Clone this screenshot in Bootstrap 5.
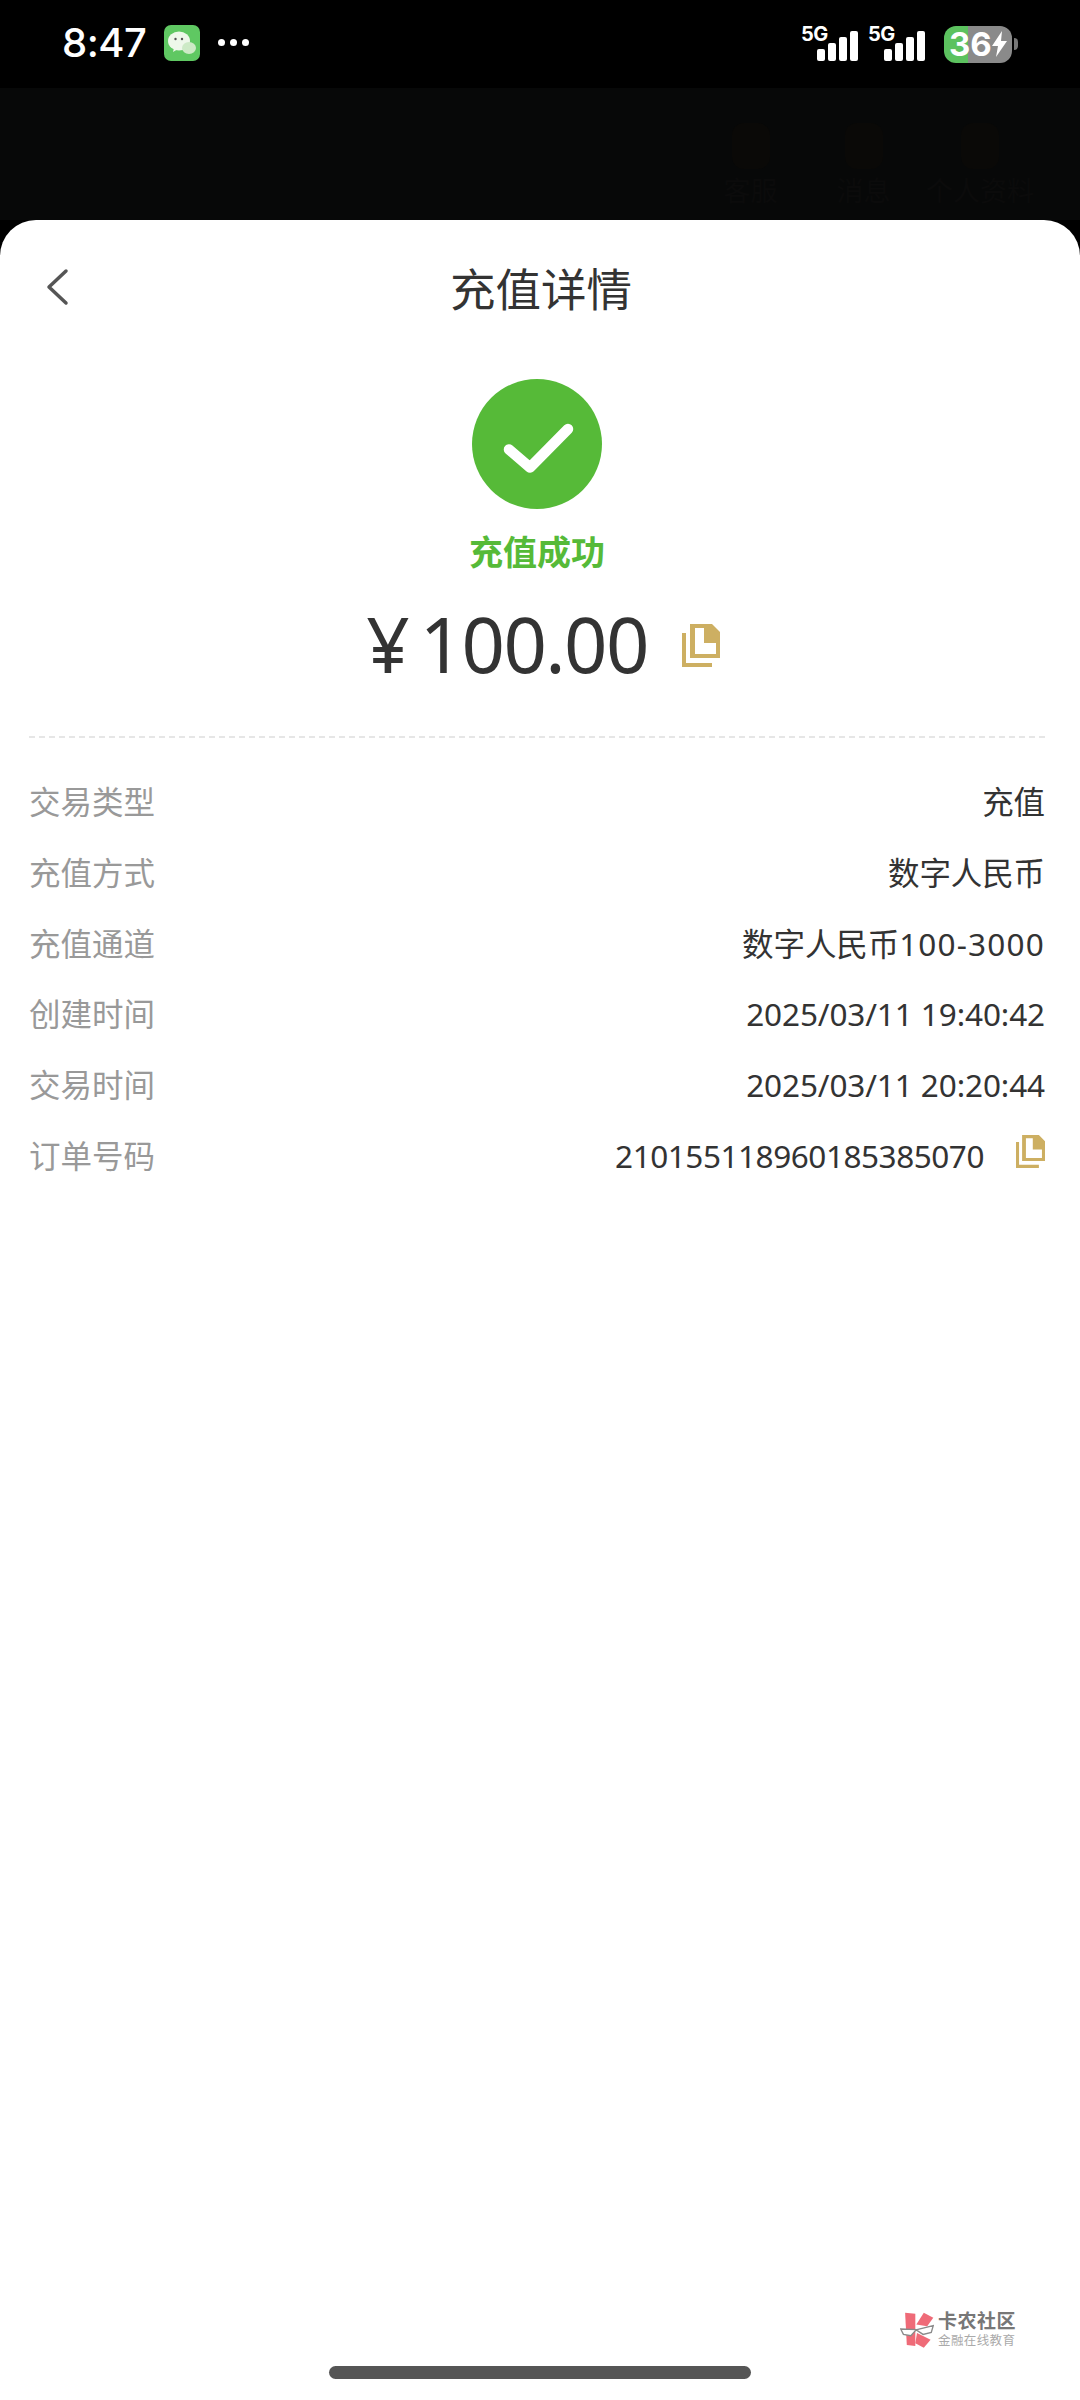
<!DOCTYPE html>
<html lang="zh">
<head>
<meta charset="utf-8">
<title>充值详情</title>
<link href="https://cdn.jsdelivr.net/npm/bootstrap@5.3.0/dist/css/bootstrap.min.css" rel="stylesheet">
<style>
html,body{margin:0;background:#000;}
body{font-family:"Noto Sans","Noto Sans CJK SC",sans-serif;color:#333;}
.screen{width:1080px;height:2400px;position:relative;overflow:hidden;}
.statusbar{height:88px;background:#000;color:#fff;padding:0 62px 0 62px;}
.clock{font-family:Inter,sans-serif;font-size:40px;font-weight:500;line-height:1;letter-spacing:-.5px;margin-top:-2px;}
.wx{width:36px;height:36px;margin-left:18px;margin-top:-2px;}
.more{margin-left:18px;gap:5px;margin-top:-4px;}
.more i{display:block;width:7px;height:7px;border-radius:50%;background:#fff;}
.sig{position:relative;width:60px;height:34px;margin-right:7px;}
.sig b{position:absolute;left:0;top:-3px;font:700 20px/1 Inter,sans-serif;letter-spacing:-.5px;}
.sig svg{position:absolute;left:16px;top:4px;}
.batt{width:68px;height:37px;border-radius:12px;background:linear-gradient(90deg,#5cc25f 0,#5cc25f 36%,#8a8a8a 36%,#8a8a8a 100%);font:700 33px/37px Inter,sans-serif;padding-left:5px;margin-left:9px;}
.nub{width:4px;height:12px;border-radius:0 4px 4px 0;background:#777;margin-left:2px;}
.dimbar{height:132px;background:#070808;padding-top:35px;padding-right:40px;}
.dimitem{width:113px;text-align:center;color:#0b0b0b;font-size:27px;line-height:1;}
.dimitem span{display:block;width:38px;height:46px;margin:0 auto 8px;background:#0a0907;border-radius:12px;}
.dimwide{width:120px;}
.sheet{background:#fff;border-radius:36px 36px 0 0;height:2180px;padding:0 35px 0 29px;}
.topbar{height:140px;position:relative;}
.back{position:absolute;left:15px;top:48px;}
.sheettitle{font-size:45.500px;font-weight:400;color:#333;line-height:1;margin:0 -4px 0 4px;padding-top:47px;text-align:center;}
.okcircle{width:130px;height:130px;border-radius:50%;background:#56ba38;margin-top:19px;}
.oktext{color:#56ba38;font-size:34px;font-weight:700;line-height:1;margin-top:26px;}
.amount{margin-top:39px;height:72px;color:#333;line-height:1;padding-left:12px;}
.yen{font-size:76px;margin-right:10px;}
.num{font-size:76px;letter-spacing:-1.600px;}
.copybig{margin-left:34px;margin-top:2px;}
.rule{border-top:2px dashed #e6e6e6;margin-top:56px;margin-bottom:48px;}
.inforow{height:70.8px;font-size:31.500px;line-height:1;}
.lab{color:#999;}
.val{color:#333;letter-spacing:-.1px;}
.widenum{letter-spacing:1.200px;}
.ordernum{letter-spacing:-.45px;}
.copysmall{margin-left:32px;margin-top:-5px;}
.wm{position:absolute;left:900px;top:2312px;}
.wm1{font-size:19px;font-weight:700;color:#777;line-height:1;letter-spacing:.5px;}
.wm2{font-size:12.500px;color:#aaa;line-height:1;letter-spacing:.4px;margin-top:4px;}
.homebar{position:absolute;left:329px;top:2366px;width:422px;height:13px;border-radius:7px;background:#555;}
</style>
</head>
<body>
<div class="screen">
  <div class="statusbar d-flex align-items-center">
    <div class="clock">8:47</div>
    <svg class="wx" viewBox="0 0 36 36"><rect width="36" height="36" rx="7" fill="#5fc862"/><ellipse cx="15" cy="16" rx="11" ry="9.500" fill="#eef8ea"/><path d="M10 23l-1 4 5-3z" fill="#eef8ea"/><ellipse cx="25" cy="23" rx="7" ry="6" fill="#cdeac6"/><circle cx="11.500" cy="14" r="1.200" fill="#555"/><circle cx="18" cy="14" r="1.200" fill="#555"/></svg>
    <div class="more d-flex"><i></i><i></i><i></i></div>
    <div class="ms-auto d-flex align-items-center">
      <div class="sig"><b>5G</b><svg width="44" height="30" viewBox="0 0 44 30"><rect x="0" y="18" width="8" height="12" rx="2" fill="#fff"/><rect x="11" y="12" width="8" height="18" rx="2" fill="#fff"/><rect x="22" y="6" width="8" height="24" rx="2" fill="#fff"/><rect x="33" y="0" width="8" height="30" rx="2" fill="#fff"/></svg></div>
      <div class="sig"><b>5G</b><svg width="44" height="30" viewBox="0 0 44 30"><rect x="0" y="18" width="8" height="12" rx="2" fill="#fff"/><rect x="11" y="12" width="8" height="18" rx="2" fill="#fff"/><rect x="22" y="6" width="8" height="24" rx="2" fill="#fff"/><rect x="33" y="0" width="8" height="30" rx="2" fill="#fff"/></svg></div>
      <div class="batt d-flex align-items-center"><span>36</span><svg width="16" height="26" viewBox="0 0 16 26"><path d="M10 0L0 15h6l-2 11L15 10H9z" fill="#fff"/></svg></div>
      <div class="nub"></div>
    </div>
  </div>
  <div class="dimbar d-flex justify-content-end">
    <div class="dimitem"><span></span>客服</div>
    <div class="dimitem"><span></span>消息</div>
    <div class="dimitem dimwide"><span></span>个人资料</div>
  </div>
  <div class="sheet">
    <div class="topbar">
      <svg class="back" width="26" height="38" viewBox="0 0 26 38"><path d="M22 3L5 19l17 16" fill="none" stroke="#555" stroke-width="3.500" stroke-linecap="round" stroke-linejoin="round"/></svg>
      <h1 class="sheettitle">充值详情</h1>
    </div>
    <div class="d-flex flex-column align-items-center">
      <div class="okcircle d-flex align-items-center justify-content-center">
        <svg width="74" height="60" viewBox="0 0 74 60"><path d="M9 35.500L30 53.500 68 15" fill="none" stroke="#fff" stroke-width="10.500" stroke-linecap="round" stroke-linejoin="round"/></svg>
      </div>
      <div class="oktext">充值成功</div>
      <div class="amount d-flex align-items-center">
        <span class="yen">¥</span><span class="num">100.00</span>
        <svg class="copybig" width="38" height="43" viewBox="0 0 38 43"><path d="M8 0H30l8 8V34H8zM13 4V30H34V19H22V4z" fill="#cdaf62" fill-rule="evenodd"/><path d="M0 9h4V39H30v4H0z" fill="#cdaf62"/></svg>
      </div>
    </div>
    <div class="rule"></div>
    <div class="d-flex flex-column">
      <div class="inforow d-flex justify-content-between"><span class="lab">交易类型</span><span class="val">充值</span></div>
      <div class="inforow d-flex justify-content-between"><span class="lab">充值方式</span><span class="val">数字人民币</span></div>
      <div class="inforow d-flex justify-content-between"><span class="lab">充值通道</span><span class="val">数字人民币<span class="widenum">100-3000</span></span></div>
      <div class="inforow d-flex justify-content-between"><span class="lab">创建时间</span><span class="val">2025/03/11 19:40:42</span></div>
      <div class="inforow d-flex justify-content-between"><span class="lab">交易时间</span><span class="val">2025/03/11 20:20:44</span></div>
      <div class="inforow d-flex justify-content-between"><span class="lab">订单号码</span><span class="d-flex align-items-start"><span class="val ordernum">210155118960185385070</span><svg class="copysmall" width="29" height="33" viewBox="0 0 38 43"><path d="M8 0H30l8 8V34H8zM13 4V30H34V19H22V4z" fill="#cdaf62" fill-rule="evenodd"/><path d="M0 9h4V39H30v4H0z" fill="#cdaf62"/></svg></span></div>
    </div>
  </div>
  <div class="wm d-flex align-items-center gap-1">
    <svg width="34" height="36" viewBox="120 98 100 106"><path d="M135 100l30 3v95l-25-3z" fill="#ef6b78"/><path d="M168 135l22-35 28 15-18 25z" fill="#ef6b78"/><path d="M170 160l40 20-20 23-25-13z" fill="#ef6b78"/><path d="M122 148l48 2 48-12-6 20-24 6-18-12-4 0-14 16-22-4z" fill="#fff" stroke="#8a8a8a" stroke-width="4"/></svg>
    <div><div class="wm1">卡农社区</div><div class="wm2">金融在线教育</div></div>
  </div>
  <div class="homebar"></div>
</div>
<script src="https://cdn.jsdelivr.net/npm/bootstrap@5.3.0/dist/js/bootstrap.bundle.min.js"></script>
</body>
</html>
